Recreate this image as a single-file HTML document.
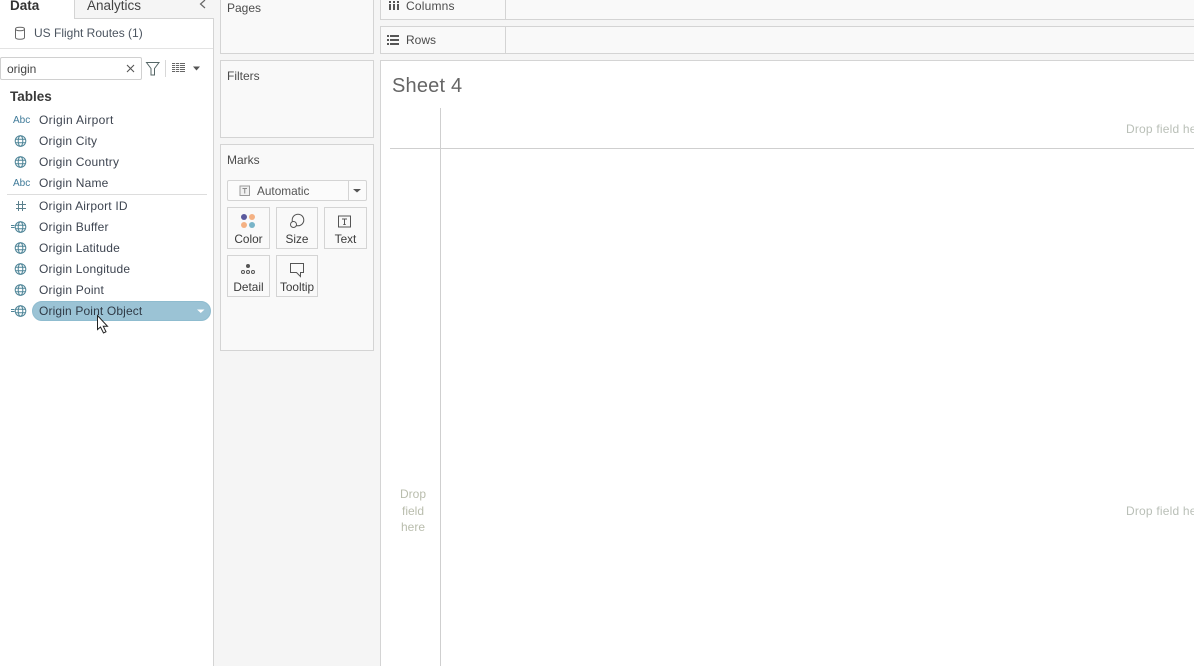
<!DOCTYPE html>
<html><head><meta charset="utf-8">
<style>
html,body{margin:0;padding:0;width:1194px;height:666px;overflow:hidden;background:#f5f5f5}
#w{position:relative;width:1194px;height:666px;overflow:hidden;background:#f5f5f5;font-family:"Liberation Sans",sans-serif;color:#3f3f3f;font-size:12px}
.a{position:absolute;white-space:nowrap}
.p{position:absolute;background:#f9f9f9;border:1px solid #d4d4d4;box-sizing:border-box}
.f{position:absolute;left:39px;line-height:16px;font-size:12px;color:#3d4450;letter-spacing:.2px;white-space:nowrap}
.b{position:absolute;width:43px;height:42px;background:#f9f9f9;border:1px solid #d4d4d4;box-sizing:border-box;font-size:11.800px;text-align:center;color:#3a3a3a;padding-top:25px;line-height:13px;white-space:nowrap}
.abc{position:absolute;left:13px;font-size:10px;line-height:12px;color:#3f7a99}
svg{position:absolute;overflow:visible}
</style></head><body><div id="w">
<div class="a" style="left:0;top:0;width:213px;height:666px;background:#fff;border-right:1px solid #d4d4d4"></div>
<div class="a" style="left:74px;top:0;width:139px;height:18px;background:#f5f5f5;border-bottom:1px solid #d4d4d4;border-left:1px solid #d4d4d4"></div>
<div class="a" style="left:10px;top:-2px;font-size:13.500px;font-weight:bold;line-height:16px;color:#333">Data</div>
<div class="a" style="left:87px;top:-2px;font-size:13.500px;line-height:16px;color:#444">Analytics</div>
<svg style="left:0;top:0" width="213" height="60"><path d="M205 0 L200.500 4 L205 8" fill="none" stroke="#666" stroke-width="1.200"/>
<path d="M15.500 29V37.500C15.500 39.800 24.500 39.800 24.500 37.500V29M15.500 29C15.500 26.700 24.500 26.700 24.500 29S15.500 31.300 15.500 29" fill="none" stroke="#666" stroke-width="1"/></svg>
<div class="a" style="left:34px;top:25px;line-height:16px;color:#4c5560">US Flight Routes (1)</div>
<div class="a" style="left:0;top:48px;width:213px;height:1px;background:#e3e3e3"></div>
<div class="a" style="left:0;top:57px;width:142px;height:23px;box-sizing:border-box;border:1px solid #d0d0d0;border-radius:2px;background:#fff"></div>
<div class="a" style="left:7px;top:61px;line-height:16px;color:#444">origin</div>
<svg style="left:0;top:0" width="213" height="90">
<path d="M127 65 L134 72 M134 65 L127 72" stroke="#555" stroke-width="1.100"/>
<path d="M146.500 62.500 H159 L154.500 68.500 V75 H151 V68.500 Z" fill="none" stroke="#566" stroke-width="1"/>
<path d="M165.500 60 V77" stroke="#d8d8d8" stroke-width="1"/>
<path d="M172 63.500H185M172 65.500H185M172 67.500H185M172 69.500H185M172 71.500H185" stroke="#666" stroke-width="1"/>
<path d="M175.500 63V72M179.500 63V72" stroke="#fff" stroke-width=".8"/>
<path d="M193 66.500H200L196.500 70.500Z" fill="#555"/>
</svg>
<div class="a" style="left:10px;top:89px;font-size:13.500px;font-weight:bold;line-height:16px;color:#3a3a3a">Tables</div>

<div class="abc" style="top:115px">Abc</div>
<div class="f" style="top:112px;letter-spacing:.33px">Origin Airport</div>
<div class="f" style="top:133px">Origin City</div>
<div class="f" style="top:154px">Origin Country</div>
<div class="abc" style="top:178px">Abc</div>
<div class="f" style="top:175px">Origin Name</div>
<div class="a" style="left:7px;top:194px;width:200px;height:1px;background:#ddd"></div>
<div class="f" style="top:198px">Origin Airport ID</div>
<div class="f" style="top:219px">Origin Buffer</div>
<div class="f" style="top:240px">Origin Latitude</div>
<div class="f" style="top:261px">Origin Longitude</div>
<div class="f" style="top:282px">Origin Point</div>
<div class="a" style="left:32px;top:301px;width:179px;height:20px;border-radius:10px;background:#9bc3d5;box-sizing:border-box;border:1px solid #8fbccf"></div>
<div class="f" style="top:303px;color:#2f3a46;letter-spacing:.14px">Origin Point Object</div>

<svg style="left:0;top:0" width="213" height="340" fill="none" stroke="#4f8598" stroke-width="1">
<g><circle cx="20.500" cy="141" r="5.300"/><ellipse cx="20.500" cy="141" rx="2.300" ry="5.300"/><path d="M15.500 139.300H25.500M15.500 142.700H25.500"/></g>
<g transform="translate(0,21)"><circle cx="20.500" cy="141" r="5.300"/><ellipse cx="20.500" cy="141" rx="2.300" ry="5.300"/><path d="M15.500 139.300H25.500M15.500 142.700H25.500"/></g>
<g transform="translate(0,86)"><circle cx="20.500" cy="141" r="5.300"/><ellipse cx="20.500" cy="141" rx="2.300" ry="5.300"/><path d="M15.500 139.300H25.500M15.500 142.700H25.500"/></g>
<g transform="translate(0,107)"><circle cx="20.500" cy="141" r="5.300"/><ellipse cx="20.500" cy="141" rx="2.300" ry="5.300"/><path d="M15.500 139.300H25.500M15.500 142.700H25.500"/></g>
<g transform="translate(0,128)"><circle cx="20.500" cy="141" r="5.300"/><ellipse cx="20.500" cy="141" rx="2.300" ry="5.300"/><path d="M15.500 139.300H25.500M15.500 142.700H25.500"/></g>
<g transform="translate(0,149)"><circle cx="20.500" cy="141" r="5.300"/><ellipse cx="20.500" cy="141" rx="2.300" ry="5.300"/><path d="M15.500 139.300H25.500M15.500 142.700H25.500"/></g>
<g transform="translate(0,170)"><circle cx="20.500" cy="141" r="5.300"/><ellipse cx="20.500" cy="141" rx="2.300" ry="5.300"/><path d="M15.500 139.300H25.500M15.500 142.700H25.500"/></g>
<path d="M11 225.500H14.500M11 227.500H14.500M11 309.500H14.500M11 311.500H14.500"/>
<path d="M18.500 201V211M22.500 201V211M16 204.500H26M16 208.500H26" stroke="#5a7f8c"/>
<path d="M204.500 309.500H197L200.750 313Z" fill="#fff" stroke="none"/>
<path d="M97.500 315.500V329.500L100.500 327L103.500 333L106 331.800L103.300 326.300H107.500Z" fill="#fff" stroke="#222"/>
</svg>

<div class="p" style="left:220px;top:-10px;width:154px;height:64px"></div>
<div class="a" style="left:227px;top:0;line-height:16px;color:#4c4c4c">Pages</div>
<div class="p" style="left:220px;top:60px;width:154px;height:78px"></div>
<div class="a" style="left:227px;top:68px;line-height:16px;color:#4c4c4c">Filters</div>
<div class="p" style="left:220px;top:144px;width:154px;height:207px"></div>
<div class="a" style="left:227px;top:152px;line-height:16px;color:#4c4c4c">Marks</div>

<div class="a" style="left:227px;top:180px;width:140px;height:21px;background:#fbfbfb;border:1px solid #d4d4d4;border-radius:2px;box-sizing:border-box"></div>
<div class="a" style="left:348px;top:181px;width:1px;height:19px;background:#d4d4d4"></div>
<div class="a" style="left:257px;top:183px;font-size:11.800px;line-height:16px;color:#555">Automatic</div>
<div class="b" style="left:227px;top:207px">Color</div>
<div class="b" style="left:276px;top:207px;width:42px">Size</div>
<div class="b" style="left:324px;top:207px">Text</div>
<div class="b" style="left:227px;top:255px">Detail</div>
<div class="b" style="left:276px;top:255px;width:42px">Tooltip</div>
<svg style="left:0;top:0" width="380" height="300" fill="none">
<rect x="240" y="186" width="9.500" height="9.500" stroke="#9a9a9a" fill="#f0f0f0"/>
<path d="M242.500 188.500H247M244.750 188.500V193.500" stroke="#888"/>
<path d="M353 189H361L357 192.500Z" fill="#555"/>
<circle cx="244" cy="217" r="3" fill="#5b5a9e"/><circle cx="252" cy="217" r="3" fill="#f4b183"/>
<circle cx="244" cy="225" r="3" fill="#f4b183"/><circle cx="252" cy="225" r="3" fill="#78b4c8"/>
<circle cx="298" cy="220" r="5.800" stroke="#555"/><circle cx="293.500" cy="224.500" r="3" stroke="#555" fill="#f9f9f9"/>
<rect x="338.500" y="216" width="12" height="11" stroke="#555"/>
<path d="M342 219H347M344.500 219V224.500M343.300 224.500H345.700" stroke="#555"/>
<circle cx="248" cy="266" r="2" fill="#555"/>
<circle cx="243" cy="272" r="1.500" stroke="#555"/><circle cx="248" cy="272" r="1.500" stroke="#555"/><circle cx="253" cy="272" r="1.500" stroke="#555"/>
<path d="M290.500 263.500H303.500V272.500H300.500V276.500L296.500 272.500H290.500Z" stroke="#555"/>
</svg>

<div class="p" style="left:380px;top:-10px;width:830px;height:30px"></div>
<div class="p" style="left:380px;top:26px;width:830px;height:28px"></div>
<div class="a" style="left:505px;top:0;width:1px;height:19px;background:#d4d4d4"></div>
<div class="a" style="left:505px;top:27px;width:1px;height:26px;background:#d4d4d4"></div>
<div class="a" style="left:406px;top:-2px;line-height:16px;color:#4c4c4c;letter-spacing:.2px">Columns</div>
<div class="a" style="left:406px;top:32px;line-height:16px;color:#4c4c4c">Rows</div>
<svg style="left:0;top:0" width="420" height="50">
<path d="M389 4H391V10H389ZM393 4H395V10H393ZM397 4H399V10H397ZM389 1H391V3H389ZM393 1H395V3H393ZM397 1H399V3H397Z" fill="#555"/>
<path d="M387 35H389V37H387ZM387 39H389V41H387ZM387 43H389V45H387ZM390 35H399V37H390ZM390 39H399V41H390ZM390 43H399V45H390Z" fill="#555"/>
</svg>

<div class="a" style="left:380px;top:60px;width:830px;height:620px;background:#fff;border:1px solid #d4d4d4;box-sizing:border-box"></div>
<div class="a" style="left:392px;top:74px;font-size:20px;line-height:24px;color:#666;letter-spacing:.2px">Sheet 4</div>
<div class="a" style="left:440px;top:108px;width:1px;height:558px;background:#cfcfcf"></div>
<div class="a" style="left:390px;top:148px;width:804px;height:1px;background:#cfcfcf"></div>
<div class="a" style="left:1126px;top:121px;line-height:16px;color:#b9bfb7;letter-spacing:.2px">Drop field here</div>
<div class="a" style="left:1126px;top:503px;line-height:16px;color:#b9bfb7;letter-spacing:.2px">Drop field here</div>
<div class="a" style="left:393px;top:486px;width:40px;text-align:center;line-height:16.500px;color:#b9bdad;white-space:normal">Drop<br>field<br>here</div>
</div></body></html>
